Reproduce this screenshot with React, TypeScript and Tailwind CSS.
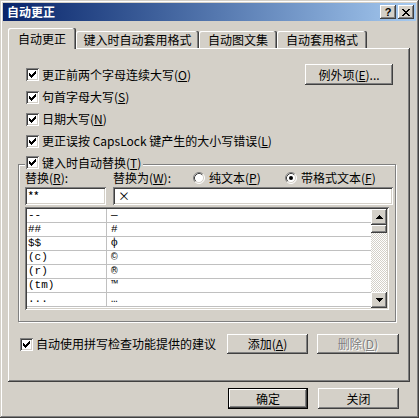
import type { ReactNode } from 'react'

const CHECK = ['......X', '.....XX', 'X...XXX', 'XX.XXX.', 'XXXXX..', '.XXX...', '..X....']
const CLOSE = ['XX....XX', '.XX..XX.', '..XXXX..', '...XX...', '..XXXX..', '.XX..XX.', 'XX....XX']
const UP = ['...X...', '..XXX..', '.XXXXX.', 'XXXXXXX']
const DOWN = [...UP].reverse()

const ROWS = [
  ['--', '—'],
  ['##', '#'],
  ['$$', 'ф'],
  ['(c)', '©'],
  ['(r)', '®'],
  ['(tm)', '™'],
  ['...', '…'],
]

// classic 3d edges
const raised = 'shadow-[inset_-1px_-1px_#404040,inset_1px_1px_#fff,inset_-2px_-2px_#808080,inset_2px_2px_#d4d0c8]'
const sunken = 'shadow-[inset_1px_1px_#808080,inset_-1px_-1px_#fff,inset_2px_2px_#404040,inset_-2px_-2px_#d4d0c8]'

function Pixels({ rows, color = '#000' }: { rows: string[]; color?: string }) {
  const w = rows[0].length
  const h = rows.length
  return (
    <svg width={w} height={h} viewBox={`0 0 ${w} ${h}`} shapeRendering="crispEdges" className="block">
      {rows.flatMap((r, y) =>
        r.split('').map((c, x) =>
          c === 'X' ? <rect key={`${x}-${y}`} x={x} y={y} width="1" height="1" fill={color} /> : null,
        ),
      )}
    </svg>
  )
}

function Check({ checked = true }: { checked?: boolean }) {
  return (
    <span className={`flex w-[13px] h-[13px] shrink-0 items-center justify-center bg-white ${sunken}`}>
      {checked && <Pixels rows={CHECK} />}
    </span>
  )
}

function Radio({ on }: { on?: boolean }) {
  return (
    <svg width="12" height="12" viewBox="0 0 12 12" className="block shrink-0">
      <circle cx="6" cy="6" r="5" fill="#fff" />
      <path d="M2.11 9.89 A5.5 5.5 0 0 1 9.89 2.11" fill="none" stroke="#808080" />
      <path d="M9.89 2.11 A5.5 5.5 0 0 1 2.11 9.89" fill="none" stroke="#fff" />
      <path d="M2.82 9.18 A4.5 4.5 0 0 1 9.18 2.82" fill="none" stroke="#404040" />
      <path d="M9.18 2.82 A4.5 4.5 0 0 1 2.82 9.18" fill="none" stroke="#d4d0c8" />
      {on && <circle cx="6" cy="6" r="2" fill="#000" />}
    </svg>
  )
}

function Row({ children, className = '' }: { children: ReactNode; className?: string }) {
  return <div className={`flex items-center gap-[3px] ${className}`}>{children}</div>
}

export default function App() {
  return (
    <div className="w-[419px] h-[418px] bg-[#d4d0c8] p-[3px] flex flex-col shadow-[inset_-1px_-1px_#404040,inset_1px_1px_#d4d0c8,inset_-2px_-2px_#808080,inset_2px_2px_#fff] font-['Noto_Sans_CJK_SC',sans-serif] text-[12px] leading-[14px] text-black select-none">
      {/* title bar */}
      <div className="h-[18px] shrink-0 flex items-center justify-between bg-linear-to-r from-[#0a246a] to-[#a6caf0] pl-[4px] pr-[2px]">
        <span className="font-bold text-white">自动更正</span>
        <div className="flex gap-[2px]">
          <span className={`flex w-[16px] h-[14px] items-center justify-center bg-[#d4d0c8] font-['Liberation_Sans',sans-serif] font-bold text-[11px] leading-none ${raised}`}>
            ?
          </span>
          <span className={`flex w-[16px] h-[14px] items-center justify-center bg-[#d4d0c8] ${raised}`}>
            <Pixels rows={CLOSE} />
          </span>
        </div>
      </div>

      <div className="flex-1 flex flex-col px-[5px]">
        {/* tabs */}
        <div className="h-[27px] shrink-0 flex items-end">
          <div className="relative z-10 w-[68px] h-[21px] -mb-[1px] pt-[4px] text-center bg-[#d4d0c8] rounded-t-[2px] shadow-[inset_-1px_0_#404040,inset_-2px_0_#808080,inset_1px_1px_#fff]">
            自动更正
          </div>
          <div className="w-[123px] h-[17px] pt-[2px] text-center rounded-t-[2px] shadow-[inset_-1px_0_#404040,inset_-2px_0_#808080,inset_1px_1px_#fff]">
            键入时自动套用格式
          </div>
          <div className="w-[78px] h-[17px] pt-[2px] text-center rounded-t-[2px] shadow-[inset_-1px_0_#404040,inset_-2px_0_#808080,inset_1px_1px_#fff]">
            自动图文集
          </div>
          <div className="w-[90px] h-[17px] pt-[2px] text-center rounded-t-[2px] shadow-[inset_-1px_0_#404040,inset_-2px_0_#808080,inset_1px_1px_#fff]">
            自动套用格式
          </div>
        </div>

        {/* panel */}
        <div className={`w-[402px] h-[334px] shrink-0 flex flex-col ${raised}`}>
          <div className="mt-[16px] h-[21px] flex items-center justify-between pl-[18px] pr-[17px]">
            <Row>
              <Check />
              <span>更正前两个字母连续大写(<u>O</u>)</span>
            </Row>
            <button className={`w-[88px] h-[21px] bg-[#d4d0c8] ${raised}`}>
              例外项(<u>E</u>)...
            </button>
          </div>
          <Row className="mt-[1px] h-[22px] pl-[18px]">
            <Check />
            <span>句首字母大写(<u>S</u>)</span>
          </Row>
          <Row className="h-[22px] pl-[18px]">
            <Check />
            <span>日期大写(<u>N</u>)</span>
          </Row>
          <Row className="h-[22px] pl-[18px]">
            <Check />
            <span>更正误按 CapsLock 键产生的大小写错误(<u>L</u>)</span>
          </Row>

          {/* group */}
          <div className="relative mt-[12px] ml-[10px] w-[378px] h-[158px] border border-[#808080] shadow-[inset_1px_1px_#fff,1px_1px_#fff] flex flex-col pl-[6px]">
            <Row className="absolute left-[6px] -top-[10px] h-[15px] bg-[#d4d0c8] pl-[1px] pr-[2px]">
              <Check />
              <span>键入时自动替换(<u>T</u>)</span>
            </Row>

            <div className="mt-[6px] h-[14px] flex items-center">
              <span className="w-[88px]">替换(<u>R</u>):</span>
              <span className="w-[80px]">替换为(<u>W</u>):</span>
              <Row className="w-[92px]">
                <Radio />
                <span className="ml-[1px]">纯文本(<u>P</u>)</span>
              </Row>
              <Row>
                <Radio on />
                <span className="ml-[1px]">带格式文本(<u>F</u>)</span>
              </Row>
            </div>

            <div className="mt-[2px] flex gap-[7px]">
              <div className={`w-[81px] h-[18px] bg-white pl-[3px] pt-[2px] ${sunken}`}>**</div>
              <div className={`w-[280px] h-[18px] bg-white pl-[5px] pt-[2px] ${sunken}`}>×</div>
            </div>

            <div className={`mt-[2px] w-[364px] h-[103px] bg-white p-[2px] flex ${sunken}`}>
              <div className="flex-1 flex flex-col font-['Liberation_Mono',monospace] text-[11px] leading-[13px]">
                {ROWS.map(([a, b]) => (
                  <div key={a} className="h-[14px] flex border-b border-[#c0c0c0]">
                    <span className="w-[80px] border-r border-[#c0c0c0] pl-[1px]">{a}</span>
                    <span className="pl-[4px]">{b}</span>
                  </div>
                ))}
              </div>
              <div className="w-[16px] flex flex-col">
                <div className={`h-[16px] flex items-center justify-center bg-[#d4d0c8] ${raised}`}>
                  <Pixels rows={UP} />
                </div>
                <div className={`h-[8px] bg-[#d4d0c8] ${raised}`} />
                <div className="flex-1 bg-[repeating-conic-gradient(#fff_0_25%,#d4d0c8_0_50%)] bg-[length:2px_2px]" />
                <div className={`h-[16px] flex items-center justify-center bg-[#d4d0c8] ${raised}`}>
                  <Pixels rows={DOWN} />
                </div>
              </div>
            </div>
          </div>

          <div className="mt-[12px] h-[20px] flex items-center pl-[12px] pr-[11px]">
            <Row>
              <Check />
              <span>自动使用拼写检查功能提供的建议</span>
            </Row>
            <div className="ml-auto flex gap-[9px]">
              <button className={`w-[81px] h-[20px] bg-[#d4d0c8] ${raised}`}>
                添加(<u>A</u>)
              </button>
              <button className={`w-[82px] h-[20px] bg-[#d4d0c8] text-[#808080] [text-shadow:1px_1px_0_#fff] ${raised}`}>
                删除(<u>D</u>)
              </button>
            </div>
          </div>
        </div>

        {/* dialog buttons */}
        <div className="mt-[6px] flex justify-end gap-[10px] pr-[12px]">
          <button className={`w-[80px] h-[21px] bg-[#d4d0c8] border border-black ${raised}`}>确定</button>
          <button className={`w-[81px] h-[21px] bg-[#d4d0c8] ${raised}`}>关闭</button>
        </div>
      </div>
    </div>
  )
}
